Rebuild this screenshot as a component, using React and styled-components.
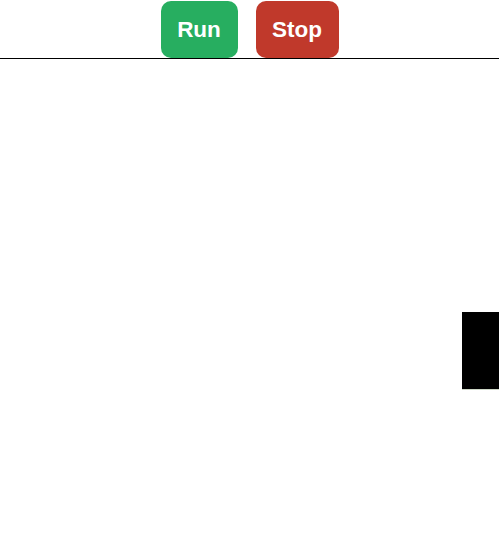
import React from "react";
import styled, { createGlobalStyle } from "styled-components";

const GlobalStyle = createGlobalStyle`
	html, body {
		margin: 0;
		padding: 0;
		background: #ffffff;
		font-family: "Liberation Sans", Arial, sans-serif;
	}
	#root {
		min-height: 559px;
		position: relative;
	}
`;

const Toolbar = styled.div`
	display: flex;
	justify-content: center;
	align-items: flex-start;
	gap: 18px;
	height: 59px;
	padding-top: 1px;
	box-sizing: border-box;
	border-bottom: 1px solid #000000;
`;

const Button = styled.button`
	height: 57px;
	width: ${(props) => props.width}px;
	padding: 0;
	border: none;
	border-radius: 10px;
	background-color: ${(props) => props.bg};
	color: #ffffff;
	font-family: "Liberation Sans", Arial, sans-serif;
	font-weight: 700;
	font-size: 22.5px;
	cursor: pointer;
`;

const SideTab = styled.div`
	position: absolute;
	top: 312px;
	right: 0;
	width: 37px;
	height: 77px;
	background: #000000;
	border-bottom: 1px solid #cfd8c8;
`;

export default function App() {
	return (
		<>
			<GlobalStyle />
			<Toolbar>
				<Button bg='#27ae60' width={77}>Run</Button>
				<Button bg='#c0392b' width={83}>Stop</Button>
			</Toolbar>
			<SideTab />
		</>
	);
}
